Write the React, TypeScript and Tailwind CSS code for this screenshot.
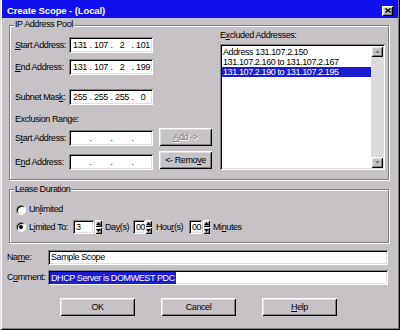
import { Fragment, type ReactNode } from 'react'

// classic NT 4 control chrome
const SUNKEN =
  'shadow-[inset_1px_1px_0_#808080,inset_-1px_-1px_0_#ffffff,inset_2px_2px_0_#000000,inset_-2px_-2px_0_#dfdfdf]'
const RAISED =
  'shadow-[inset_1px_1px_0_#ffffff,inset_-1px_-1px_0_#000000,inset_2px_2px_0_#dfdfdf,inset_-2px_-2px_0_#808080]'
const ETCHED = 'border border-[#808080] shadow-[inset_1px_1px_0_#ffffff,1px_1px_0_#ffffff]'

function IpField({ parts }: { parts: string[] }) {
  return (
    <div className={`flex h-[16px] w-[84px] items-center overflow-hidden bg-white pl-[2px] ${SUNKEN}`}>
      {parts.map((p, i) => (
        <Fragment key={i}>
          {i > 0 && <span className="w-[3px] text-center">.</span>}
          <span className="w-[18px] text-center">{p}</span>
        </Fragment>
      ))}
    </div>
  )
}

function Field({ label, parts, className = '' }: { label: ReactNode; parts: string[]; className?: string }) {
  return (
    <div className={`flex h-[16px] items-center ${className}`}>
      <span className="w-[54px]">{label}</span>
      <IpField parts={parts} />
    </div>
  )
}

function Arrow({ up, color = '#000000' }: { up?: boolean; color?: string }) {
  return (
    <svg width="5" height="3" viewBox="0 0 5 3">
      <path d={up ? 'M2.5 0 L5 3 L0 3 Z' : 'M0 0 L5 0 L2.5 3 Z'} fill={color} />
    </svg>
  )
}

function Spin({ className = '' }: { className?: string }) {
  return (
    <div className={`flex h-[14px] w-[7px] flex-col ${className}`}>
      <div className={`flex h-[7px] items-center justify-center bg-[#c6c2c6] ${RAISED}`}>
        <Arrow up />
      </div>
      <div className={`flex h-[7px] items-center justify-center bg-[#c6c2c6] ${RAISED}`}>
        <Arrow />
      </div>
    </div>
  )
}

function Radio({ checked }: { checked?: boolean }) {
  return (
    <span className="flex h-[10px] w-[10px] items-center justify-center rounded-full border border-t-[#808080] border-l-[#808080] border-r-white border-b-white bg-white shadow-[inset_1px_1px_0_#000000]">
      {checked && <span className="h-[4px] w-[4px] rounded-full bg-black" />}
    </span>
  )
}

function SmallBox({ value, className = '' }: { value: string; className?: string }) {
  return (
    <div className={`flex h-[14px] items-center bg-white pl-[3px] ${SUNKEN} ${className}`}>{value}</div>
  )
}

function Button({ children, className = '' }: { children: ReactNode; className?: string }) {
  return (
    <div className={`flex items-center justify-center bg-[#c6c2c6] ${RAISED} ${className}`}>{children}</div>
  )
}

export default function App() {
  const excluded = ['Address 131.107.2.150', '131.107.2.160 to 131.107.2.167', '131.107.2.190 to 131.107.2.195']

  return (
    <div className="flex h-[330px] w-[400px] select-none flex-col bg-[#c6c2c6] px-[2px] pb-[2px] font-['Liberation_Sans',Arial,sans-serif] text-[9px] leading-[11px] tracking-[-0.4px] text-black shadow-[inset_1px_0_0_#dfdfdf,inset_-1px_-1px_0_#000000,inset_2px_0_0_#ffffff,inset_-2px_-2px_0_#808080]">
      {/* title bar */}
      <div className="flex h-[18px] items-center bg-[#1010ee] pl-[5px] pr-[5px] pt-[3px]">
        <span className="flex-1 text-[9.5px] font-bold tracking-[-0.1px] text-white">Create Scope - (Local)</span>
        <div className={`flex h-[10px] w-[11px] items-center justify-center bg-[#c6c2c6] ${RAISED}`}>
          <svg width="6" height="5" viewBox="0 0 6 5">
            <path d="M0.5 0.5 L5.5 4.5 M5.5 0.5 L0.5 4.5" stroke="#000000" strokeWidth="1.4" />
          </svg>
        </div>
      </div>

      <div className="flex flex-col pl-[5px] pr-[9px]">
        {/* IP Address Pool */}
        <div className={`ml-[2px] mt-[7px] pb-[9px] pl-[5px] pr-[2px] ${ETCHED}`}>
          <div className="-mt-[7px] ml-[-1px] h-[11px] w-fit bg-[#c6c2c6] px-[1px]">IP Address Pool</div>
          <div className="flex">
            <div className="flex w-[197px] flex-col">
              <Field className="mt-[7px]" label={<><u>S</u>tart Address:</>} parts={['131', '107', '2', '101']} />
              <Field className="mt-[6px]" label={<><u>E</u>nd Address:</>} parts={['131', '107', '2', '199']} />
              <Field className="mt-[14px]" label={<>Subnet Mas<u>k</u>:</>} parts={['255', '255', '255', '0']} />
              <div className="mt-[9px] h-[11px]">Exclusion Range:</div>
              <div className="mt-[5px] flex">
                <div className="flex flex-col">
                  <Field label={<>S<u>t</u>art Address:</>} parts={['', '', '', '']} />
                  <Field className="mt-[8px]" label={<>E<u>n</u>d Address:</>} parts={['', '', '', '']} />
                </div>
                <div className="ml-[6px] flex flex-col">
                  <Button className="-mt-[2px] h-[18px] w-[53px] text-[#808080] [text-shadow:1px_1px_0_#ffffff]">
                    <u>A</u>dd -&gt;
                  </Button>
                  <Button className="mt-[5px] h-[18px] w-[53px]">
                    &lt;- Remo<u>v</u>e
                  </Button>
                </div>
              </div>
            </div>

            <div className="ml-[8px] flex w-[165px] flex-col">
              <div className="h-[11px]">
                E<u>x</u>cluded Addresses:
              </div>
              <div className={`mt-[3px] flex h-[126px] bg-white p-[2px] ${SUNKEN}`}>
                <div className="flex flex-1 flex-col pt-[1px] leading-[10px]">
                  {excluded.map((item, i) => (
                    <div key={item} className={`h-[10px] px-[1px] ${i === 2 ? 'bg-[#1c1cd0] text-white' : ''}`}>
                      {item}
                    </div>
                  ))}
                </div>
                <div className="flex w-[12px] flex-col justify-between bg-[#dcdadc]">
                  <div className={`flex h-[11px] items-center justify-center bg-[#c6c2c6] ${RAISED}`}>
                    <Arrow up color="#808080" />
                  </div>
                  <div className={`flex h-[11px] items-center justify-center bg-[#c6c2c6] ${RAISED}`}>
                    <Arrow color="#808080" />
                  </div>
                </div>
              </div>
            </div>
          </div>
        </div>

        {/* Lease Duration */}
        <div className={`ml-[2px] mt-[9px] pb-[8px] pl-[6px] ${ETCHED}`}>
          <div className="-mt-[6px] ml-[-2px] h-[11px] w-fit bg-[#c6c2c6] px-[1px]">Lease Duration</div>
          <div className="mt-[8px] flex h-[13px] items-center gap-[3px]">
            <Radio />
            <span>
              Un<u>l</u>imited
            </span>
          </div>
          <div className="mt-[4px] flex h-[14px] items-center">
            <Radio checked />
            <span className="ml-[3px] w-[44px]">
              L<u>i</u>mited To:
            </span>
            <SmallBox value="3" className="w-[21px]" />
            <Spin className="ml-[1px]" />
            <span className="ml-[3px] w-[28px]">
              Da<u>y</u>(s)
            </span>
            <SmallBox value="00" className="w-[12px] pl-[1px]" />
            <Spin />
            <span className="ml-[4px] w-[33px]">
              Hou<u>r</u>(s)
            </span>
            <SmallBox value="00" className="w-[13px] pl-[1px]" />
            <Spin className="ml-[1px]" />
            <span className="ml-[3px]">
              Mi<u>n</u>utes
            </span>
          </div>
        </div>

        {/* Name / Comment */}
        <div className="mt-[7px] flex h-[15px] items-center">
          <span className="w-[41px]">
            Na<u>m</u>e:
          </span>
          <div className={`flex h-[15px] w-[340px] items-center bg-white pl-[3px] ${SUNKEN}`}>Sample Scope</div>
        </div>
        <div className="mt-[5px] flex h-[15px] items-center">
          <span className="w-[41px]">
            C<u>o</u>mment:
          </span>
          <div className={`flex h-[15px] w-[340px] items-center bg-white pl-[2px] ${SUNKEN}`}>
            <span className="bg-[#1c1cd0] px-[1px] leading-[12px] text-white">DHCP Server is DOMWEST PDC</span>
          </div>
        </div>

        {/* buttons */}
        <div className="ml-[53px] mt-[13px] flex gap-[26px]">
          <Button className="h-[18px] w-[75px]">OK</Button>
          <Button className="h-[18px] w-[75px]">Cancel</Button>
          <Button className="h-[18px] w-[75px]">
            <u>H</u>elp
          </Button>
        </div>
      </div>
    </div>
  )
}
